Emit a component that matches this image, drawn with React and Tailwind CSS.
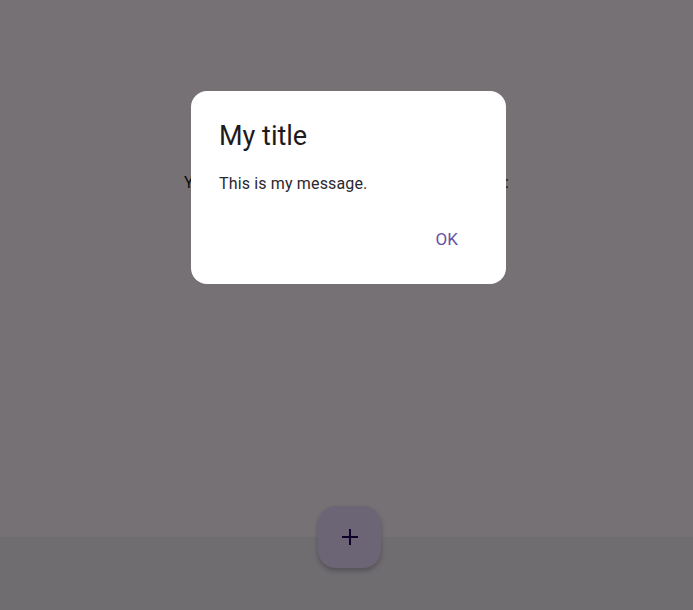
import { useState } from "react";

const App = () => {
	const [count] = useState(0);

	return (
		<div
			className="relative w-[693px] h-[610px] overflow-hidden bg-[#fef7ff] flex flex-col"
			style={{ fontFamily: "Roboto, 'Noto Sans', sans-serif" }}
		>
			{/* Page body */}
			<div className="flex-1 flex flex-col items-center pt-[171px]">
				<p className="text-[16px] leading-6 tracking-[0.15px] text-[#1d1b20]">
					You have pushed the button this many times:
				</p>
				<p className="text-[36px] leading-[44px] text-[#1d1b20]">{count}</p>
			</div>

			{/* Bottom app bar */}
			<div className="h-[73px] bg-[#f3edf7]" />

			{/* Docked FAB */}
			<button className="absolute left-[318px] top-[506px] w-[63px] h-[62px] rounded-[18px] bg-[#eaddff] shadow-[0_3px_5px_rgba(0,0,0,0.25)] flex items-center justify-center">
				<svg width="18" height="18" viewBox="0 0 18 18">
					<path d="M9 1v16M1 9h16" stroke="#21005d" strokeWidth="2" />
				</svg>
			</button>

			{/* Scrim */}
			<div className="absolute inset-0 bg-[rgba(0,0,0,0.54)]" />

			{/* Dialog */}
			<div className="absolute left-[191px] top-[91px] w-[315px] h-[193px] rounded-[16px] bg-white flex flex-col pt-[27px] px-[28px]">
				<h2 className="text-[27px] leading-9 text-[#1d1b20]">My title</h2>
				<p className="mt-[18px] text-[16px] leading-6 tracking-[0.15px] text-[#2b282e]">
					This is my message.
				</p>
				<div className="mt-[19px] flex justify-end pr-[8px]">
					<button className="h-12 px-3 text-[17px] leading-6 tracking-[0.1px] text-[#6750a4]">
						OK
					</button>
				</div>
			</div>
		</div>
	);
};

export default App;
